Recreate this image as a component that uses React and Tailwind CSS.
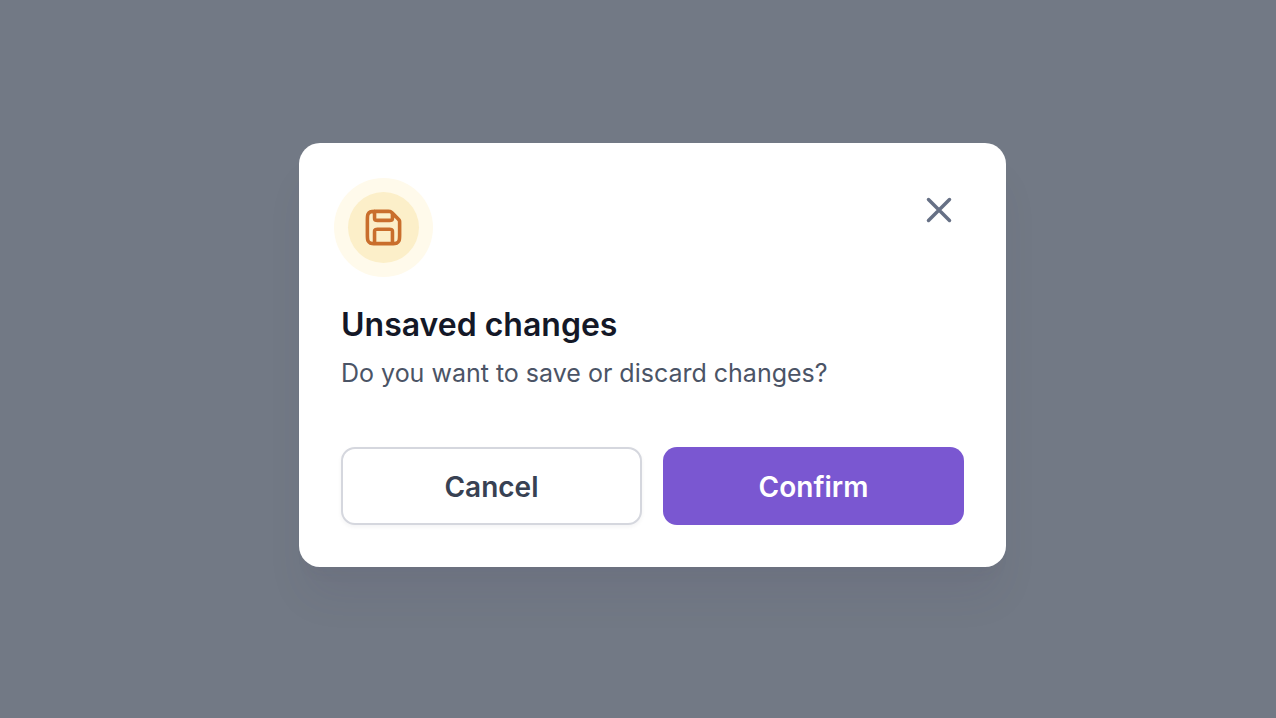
import React from 'react';

function SaveIcon() {
  return (
    <svg viewBox="0 0 24 24" fill="none" stroke="currentColor" strokeWidth="2" strokeLinecap="round" strokeLinejoin="round" className="size-[43px]" aria-hidden="true">
      <path d="M7 3V6.4C7 6.96 7 7.24 7.109 7.454C7.205 7.642 7.358 7.795 7.546 7.891C7.76 8 8.04 8 8.6 8H15.4C15.96 8 16.24 8 16.454 7.891C16.642 7.795 16.795 7.642 16.891 7.454C17 7.24 17 6.96 17 6.4V4M17 21V14.6C17 14.04 17 13.76 16.891 13.546C16.795 13.358 16.642 13.205 16.454 13.109C16.24 13 15.96 13 15.4 13H8.6C8.04 13 7.76 13 7.546 13.109C7.358 13.205 7.205 13.358 7.109 13.546C7 13.76 7 14.04 7 14.6V21M21 9.325V16.2C21 17.88 21 18.72 20.673 19.362C20.385 19.926 19.927 20.385 19.362 20.673C18.72 21 17.88 21 16.2 21H7.8C6.12 21 5.28 21 4.638 20.673C4.074 20.385 3.615 19.926 3.327 19.362C3 18.72 3 17.88 3 16.2V7.8C3 6.12 3 5.28 3.327 4.638C3.615 4.074 4.074 3.615 4.638 3.327C5.28 3 6.12 3 7.8 3H14.675C15.164 3 15.408 3 15.639 3.055C15.843 3.104 16.038 3.185 16.217 3.295C16.418 3.419 16.591 3.592 16.937 3.937L20.063 7.063C20.409 7.409 20.582 7.582 20.705 7.783C20.815 7.962 20.896 8.157 20.945 8.361C21 8.592 21 8.836 21 9.325Z" />
    </svg>
  );
}

function CloseIcon() {
  return (
    <svg viewBox="0 0 24 24" fill="none" stroke="currentColor" strokeWidth="2" strokeLinecap="round" strokeLinejoin="round" className="size-[42px]" aria-hidden="true">
      <path d="M18 6L6 18M6 6L18 18" />
    </svg>
  );
}

export default function App() {
  return (
    <div className="flex min-h-screen items-center justify-center bg-[#727985] pb-2 pl-[29px] font-['Inter',sans-serif]">
      <section
        role="dialog"
        aria-modal="true"
        aria-labelledby="dialog-title"
        aria-describedby="dialog-text"
        className="w-full max-w-[707px] rounded-[21px] bg-white px-[42px] pt-[35px] pb-[42px] shadow-[0_35px_42px_-7px_rgba(60,50,90,0.08),0_14px_14px_-7px_rgba(60,50,90,0.03)]"
      >
        <header className="-ml-[7px] flex items-start justify-between">
          <div className="flex size-[99px] items-center justify-center rounded-full bg-[#fffaeb]">
            <div className="flex size-[71px] items-center justify-center rounded-full bg-[#fcefc9] text-[#c96e2c]">
              <SaveIcon />
            </div>
          </div>
          <button type="button" aria-label="Close" className="mt-[7px] p-1 text-[#667085]">
            <CloseIcon />
          </button>
        </header>

        <h1 id="dialog-title" className="mt-[23px] text-[32px] leading-[50px] font-semibold text-[#141827]">
          Unsaved changes
        </h1>
        <p id="dialog-text" className="mt-[6px] text-[25px] leading-[35px] text-[#4b5466]">
          Do you want to save or discard changes?
        </p>

        <div className="mt-14 grid grid-cols-2 gap-[21px]">
          <button type="button" className="h-[78px] rounded-[14px] border-2 border-[#d5d7de] bg-white pt-0.5 text-[28px] font-semibold text-[#384153] shadow-[0_2px_4px_rgba(16,24,40,0.05)]">
            Cancel
          </button>
          <button type="button" className="h-[78px] rounded-[14px] bg-[#7a57d1] pt-0.5 text-[28px] font-semibold text-white">
            Confirm
          </button>
        </div>
      </section>
    </div>
  );
}
